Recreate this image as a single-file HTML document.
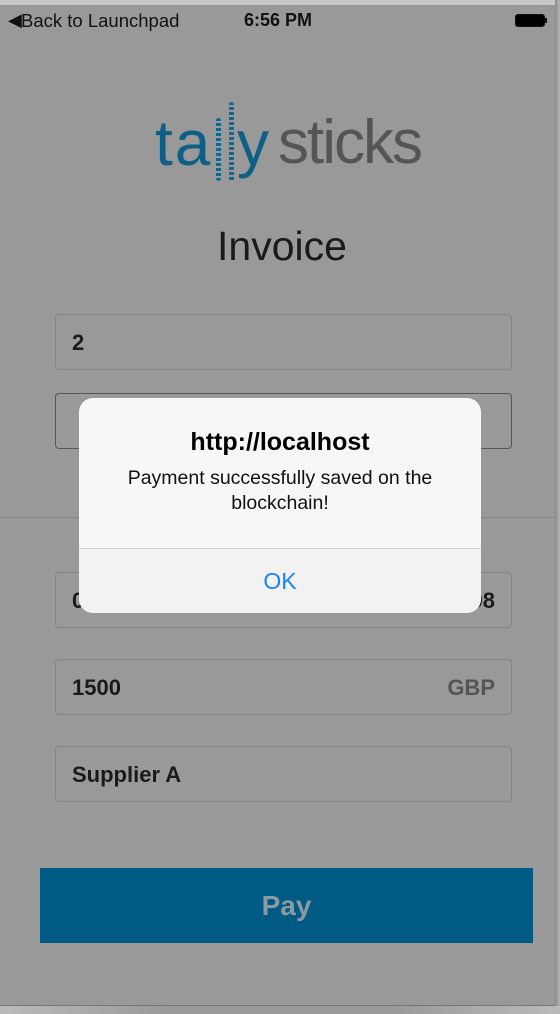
<!DOCTYPE html>
<html><head><meta charset="utf-8"><style>
*{margin:0;padding:0;box-sizing:border-box}
body{width:560px;height:1014px;background:#999;font-family:"Liberation Sans",sans-serif;position:relative;overflow:hidden}
.top{position:absolute;left:0;top:0;width:560px;height:5px;background:#c8c8c8}
.bot{position:absolute;left:0;top:1006px;width:560px;height:8px;background:linear-gradient(to right,#bbb,#999 30%,#999 70%,#bbb)}
.botline{position:absolute;left:0;top:1005px;width:555px;height:1px;background:#777}
.rs{position:absolute;left:555px;top:0;width:5px;height:1006px;background:linear-gradient(to right,#8a8a8a,#b5b5b5)}
.inp{position:absolute;left:55px;width:457px;height:56px;border:1px solid #858585;border-radius:4px;font-weight:bold;font-size:22px;color:#1a1a1a;padding:15px 16px;line-height:26px}
.abs{position:absolute;white-space:nowrap}
</style></head><body>
<div class="top"></div>
<div class="abs" style="left:8px;top:10px;font-size:18px;color:#111">&#9664;&#xFE0E;</div>
<div class="abs" style="left:21px;top:10px;font-size:18.5px;color:#111">Back to Launchpad</div>
<div class="abs" style="left:244px;top:10px;font-size:18px;font-weight:bold;color:#111">6:56 PM</div>
<div class="abs" style="left:515px;top:14px;width:30px;height:13px;border:1px solid #111;border-radius:3px;background:#000"></div>
<div class="abs" style="left:545px;top:18px;width:2px;height:5px;background:#111"></div>

<div class="abs" style="left:155px;top:98px;font-size:64px;line-height:90px;color:#0e5f85;letter-spacing:2px">ta</div>
<div class="abs" style="left:237px;top:98px;font-size:64px;line-height:90px;color:#0e5f85">y</div>
<div class="abs" style="left:278px;top:98px;font-size:62px;line-height:90px;color:#555;letter-spacing:-2px">sticks</div>
<div class="abs" style="left:216px;top:118px;width:5px;height:63px;background:repeating-linear-gradient(#0d6a93 0 3px,transparent 3px 5px);border-radius:3px"></div>
<div class="abs" style="left:229px;top:102px;width:5px;height:80px;background:repeating-linear-gradient(#0d6a93 0 3px,transparent 3px 5px);border-radius:3px"></div>

<div class="abs" style="left:0;width:560px;top:223px;text-align:center;font-size:41px;color:#1a1a1a;padding-left:4px">Invoice</div>

<div class="inp" style="top:314px">2</div>
<div class="inp" style="top:393px;border-color:#555"></div>
<div class="abs" style="left:0;top:517px;width:555px;height:1px;background:#858585"></div>
<div class="inp" style="top:572px">0<span style="float:right">98</span></div>
<div class="inp" style="top:659px">1500<span style="float:right;color:#555">GBP</span></div>
<div class="inp" style="top:746px">Supplier A</div>

<div class="abs" style="left:40px;top:868px;width:493px;height:75px;background:#005b84;color:#8a9aa3;font-weight:bold;font-size:28px;text-align:center;line-height:75px">Pay</div>

<div class="abs" style="left:79px;top:398px;width:402px;height:215px;background:#f7f7f7;border-radius:14px;overflow:hidden;white-space:normal">
<div style="text-align:center;font-weight:bold;font-size:25px;color:#000;margin-top:30px">http://localhost</div>
<div style="text-align:center;font-size:19.5px;color:#111;margin-top:9px;line-height:25px;padding:0 20px">Payment successfully saved on the blockchain!</div>
<div style="position:absolute;left:0;top:150px;width:100%;height:1px;background:#d0d0d0"></div>
<div style="position:absolute;left:0;top:151px;width:100%;height:64px;background:#f2f2f2;text-align:center;line-height:64px;font-size:23px;color:#1a82fb">OK</div>
</div>
<div class="rs"></div><div class="botline"></div><div class="bot"></div>
</body></html>
